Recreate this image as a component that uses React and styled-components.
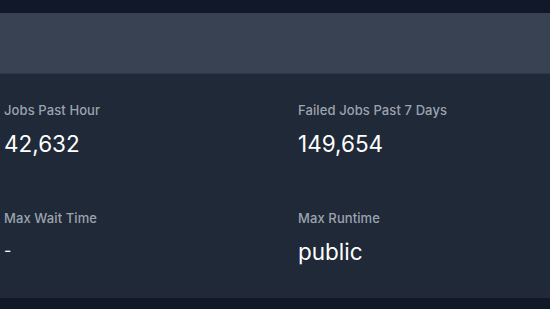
import React from "react";
import styled, { createGlobalStyle } from "styled-components";

const Global = createGlobalStyle`
  html, body { margin: 0; padding: 0; background: #111827; }
  body { font-family: Inter, "Noto Sans", sans-serif; }
`;

const Page = styled.div`
  width: 550px;
  height: 309px;
  background: #111827;
  padding-top: 13px;
  box-sizing: border-box;
  overflow: hidden;
`;

const Header = styled.div`
  height: 60px;
  background: #384253;
  border-bottom: 1px solid #2f3847;
`;

const Panel = styled.div`
  background: #1f2937;
  height: 224px;
  display: grid;
  grid-template-columns: 294px 1fr;
  grid-auto-rows: 108px;
  padding: 28px 0 0 4px;
  box-sizing: border-box;
`;

const Stat = styled.div`
  display: flex;
  flex-direction: column;
`;

const Label = styled.div`
  font-size: 13px;
  line-height: 16px;
  font-weight: 500;
  letter-spacing: 0.1px;
  color: #9ca3af;
`;

const Value = styled.div`
  margin-top: 12px;
  font-size: ${(p) => (p.$small ? "16px" : "22.5px")};
  line-height: ${(p) => (p.$small ? "24px" : "28px")};
  color: #ffffff;
`;

const stats = [
  { label: "Jobs Past Hour", value: "42,632" },
  { label: "Failed Jobs Past 7 Days", value: "149,654" },
  { label: "Max Wait Time", value: "-", small: true },
  { label: "Max Runtime", value: "public" },
];

export default function App() {
  return (
    <>
      <Global />
      <Page>
        <Header />
        <Panel>
          {stats.map((s) => (
            <Stat key={s.label}>
              <Label>{s.label}</Label>
              <Value $small={s.small}>{s.value}</Value>
            </Stat>
          ))}
        </Panel>
      </Page>
    </>
  );
}
